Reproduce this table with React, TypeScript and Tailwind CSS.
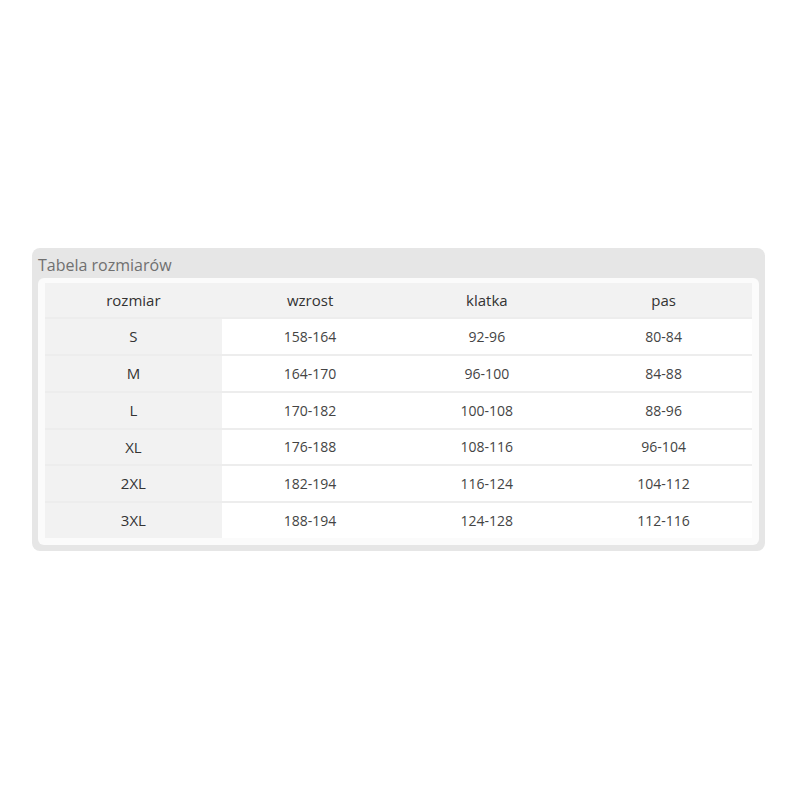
const header = ['rozmiar', 'wzrost', 'klatka', 'pas'];

const rows = [
  ['S', '158-164', '92-96', '80-84'],
  ['M', '164-170', '96-100', '84-88'],
  ['L', '170-182', '100-108', '88-96'],
  ['XL', '176-188', '108-116', '96-104'],
  ['2XL', '182-194', '116-124', '104-112'],
  ['3XL', '188-194', '124-128', '112-116'],
];

export default function App() {
  return (
    <div
      className="flex h-[800px] w-[800px] items-center justify-center bg-white"
      style={{ fontFamily: '"Open Sans", Arial, sans-serif' }}
    >
      <div className="mr-[3px] mt-[-1px] w-[733px] rounded-lg bg-[#e6e6e6] px-[6px] pb-[6px] pt-[6px]">
        <div className="pb-[2px] text-[16px] leading-[22px] text-[#707070]">
          Tabela rozmiarów
        </div>
        <div className="rounded-md bg-[#fbfbfb] px-[7px] pb-[7px] pt-[5px]">
          <div className="grid grid-cols-4 border-b-2 border-[#ededed] bg-[#f2f2f2] text-[15px] font-medium text-[#333]">
            {header.map((h) => (
              <div key={h} className="flex h-[34px] items-center justify-center">
                {h}
              </div>
            ))}
          </div>
          {rows.map((r, i) => (
            <div
              key={r[0]}
              className={
                'grid grid-cols-4 text-[14px] text-[#444] ' +
                (i < rows.length - 1 ? 'border-b-2 border-[#ededed]' : '')
              }
            >
              <div className="flex h-[34.8px] items-center justify-center bg-[#f2f2f2] text-[15px] font-medium text-[#333]">
                {r[0]}
              </div>
              {r.slice(1).map((c, j) => (
                <div key={j} className="flex h-[34.8px] items-center justify-center bg-white">
                  {c}
                </div>
              ))}
            </div>
          ))}
        </div>
      </div>
    </div>
  );
}
